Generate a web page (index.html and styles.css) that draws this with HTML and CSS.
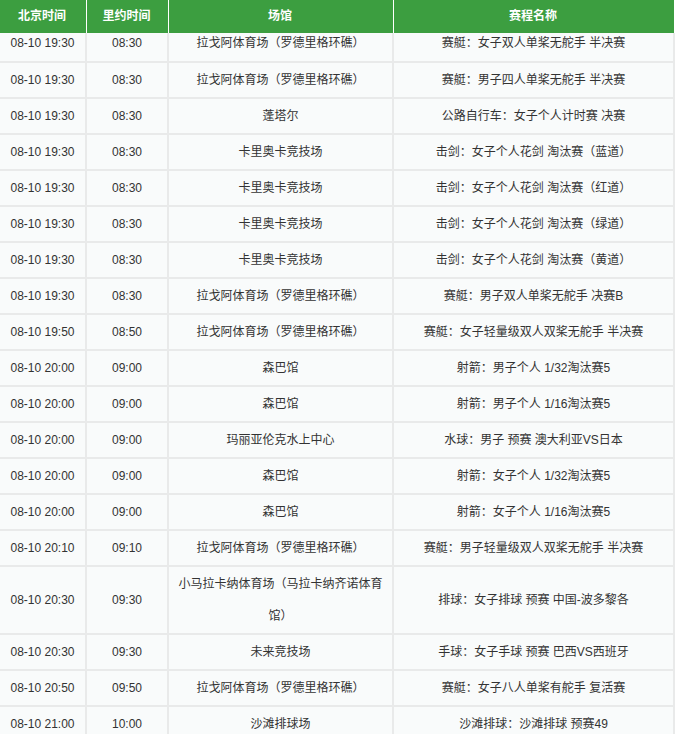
FILE: index.html
```html
<!DOCTYPE html>
<html lang="zh-CN">
<head>
<meta charset="utf-8">
<title>赛程</title>
<link rel="stylesheet" href="styles.css">
</head>
<body>
<table class="schedule">
  <colgroup>
    <col class="c-bj">
    <col class="c-rio">
    <col class="c-venue">
    <col class="c-event">
  </colgroup>
  <thead>
    <tr><th>北京时间</th><th>里约时间</th><th>场馆</th><th>赛程名称</th></tr>
  </thead>
  <tbody>
    <tr class="partial"><td>08-10 19:30</td><td>08:30</td><td>拉戈阿体育场（罗德里格环礁）</td><td>赛艇：女子双人单桨无舵手 半决赛</td></tr>
    <tr><td>08-10 19:30</td><td>08:30</td><td>拉戈阿体育场（罗德里格环礁）</td><td>赛艇：男子四人单桨无舵手 半决赛</td></tr>
    <tr><td>08-10 19:30</td><td>08:30</td><td>蓬塔尔</td><td>公路自行车：女子个人计时赛 决赛</td></tr>
    <tr><td>08-10 19:30</td><td>08:30</td><td>卡里奥卡竞技场</td><td>击剑：女子个人花剑 淘汰赛（蓝道）</td></tr>
    <tr><td>08-10 19:30</td><td>08:30</td><td>卡里奥卡竞技场</td><td>击剑：女子个人花剑 淘汰赛（红道）</td></tr>
    <tr><td>08-10 19:30</td><td>08:30</td><td>卡里奥卡竞技场</td><td>击剑：女子个人花剑 淘汰赛（绿道）</td></tr>
    <tr><td>08-10 19:30</td><td>08:30</td><td>卡里奥卡竞技场</td><td>击剑：女子个人花剑 淘汰赛（黄道）</td></tr>
    <tr><td>08-10 19:30</td><td>08:30</td><td>拉戈阿体育场（罗德里格环礁）</td><td>赛艇：男子双人单桨无舵手 决赛B</td></tr>
    <tr><td>08-10 19:50</td><td>08:50</td><td>拉戈阿体育场（罗德里格环礁）</td><td>赛艇：女子轻量级双人双桨无舵手 半决赛</td></tr>
    <tr><td>08-10 20:00</td><td>09:00</td><td>森巴馆</td><td>射箭：男子个人 1/32淘汰赛5</td></tr>
    <tr><td>08-10 20:00</td><td>09:00</td><td>森巴馆</td><td>射箭：男子个人 1/16淘汰赛5</td></tr>
    <tr><td>08-10 20:00</td><td>09:00</td><td>玛丽亚伦克水上中心</td><td>水球：男子 预赛 澳大利亚VS日本</td></tr>
    <tr><td>08-10 20:00</td><td>09:00</td><td>森巴馆</td><td>射箭：女子个人 1/32淘汰赛5</td></tr>
    <tr><td>08-10 20:00</td><td>09:00</td><td>森巴馆</td><td>射箭：女子个人 1/16淘汰赛5</td></tr>
    <tr><td>08-10 20:10</td><td>09:10</td><td>拉戈阿体育场（罗德里格环礁）</td><td>赛艇：男子轻量级双人双桨无舵手 半决赛</td></tr>
    <tr><td>08-10 20:30</td><td>09:30</td><td>小马拉卡纳体育场（马拉卡纳齐诺体育馆）</td><td>排球：女子排球 预赛 中国-波多黎各</td></tr>
    <tr><td>08-10 20:30</td><td>09:30</td><td>未来竞技场</td><td>手球：女子手球 预赛 巴西VS西班牙</td></tr>
    <tr><td>08-10 20:50</td><td>09:50</td><td>拉戈阿体育场（罗德里格环礁）</td><td>赛艇：女子八人单桨有舵手 复活赛</td></tr>
    <tr><td>08-10 21:00</td><td>10:00</td><td>沙滩排球场</td><td>沙滩排球：沙滩排球 预赛49</td></tr>
  </tbody>
</table>
</body>
</html>
```

FILE: styles.css
```css
html, body {
  margin: 0;
  padding: 0;
  background: #ffffff;
}

.schedule {
  width: 675px;
  table-layout: fixed;
  border-collapse: separate;
  border-spacing: 0;
  font-family: "Liberation Sans", "Noto Sans CJK SC", sans-serif;
  font-size: 12px;
  color: #333333;
}

.c-bj { width: 87px; }
.c-rio { width: 82px; }
.c-venue { width: 225px; }
.c-event { width: 281px; }

.schedule th {
  height: 33px;
  padding: 0 2px 0 0;
  line-height: 33px;
  background: #3c9e40;
  color: #ffffff;
  font-weight: bold;
  text-align: center;
  border-right: 1px solid #ffffff;
}

.schedule td {
  padding: 1px 5px;
  line-height: 32px;
  text-align: center;
  vertical-align: middle;
  background: #f9fbfb;
  border-right: 2px solid #e9eaea;
  border-bottom: 2px solid #e9eaea;
  word-break: break-all;
}

.schedule tr.partial td {
  height: 28px;
  padding: 0 5px;
  line-height: 20px;
  vertical-align: top;
}
```
